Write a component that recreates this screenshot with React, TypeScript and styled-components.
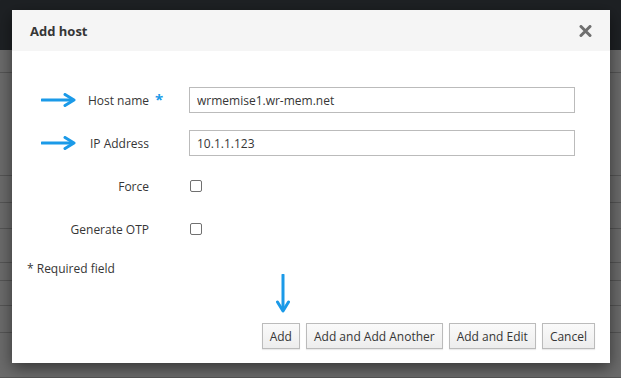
import React from "react";
import styled, { createGlobalStyle } from "styled-components";

const GlobalStyle = createGlobalStyle`
    html, body {
        margin: 0;
        padding: 0;
        background: #6b6b6b;
    }
    body {
        font-family: "Open Sans", "Liberation Sans", sans-serif;
    }
`;

const Page = styled.div`
    position: relative;
    width: 621px;
    height: 378px;
    overflow: hidden;
    background: #6b6b6b;
`;

const TopBar = styled.div`
    height: 50px;
    background: #1e2124;
`;

const BackRow = styled.div<{ $h: number }>`
    height: ${(p) => p.$h - 1}px;
    border-bottom: 1px solid #555555;
`;

const Modal = styled.div`
    position: absolute;
    top: 10px;
    left: 12px;
    width: 598px;
    height: 353px;
    background: #ffffff;
    box-shadow: 0 5px 15px rgba(0, 0, 0, 0.5);
    display: flex;
    flex-direction: column;
`;

const Header = styled.div`
    height: 41px;
    background: #f5f5f5;
    display: flex;
    align-items: center;
    justify-content: space-between;
    padding: 0 18px 0 18px;
    box-sizing: border-box;
`;

const Title = styled.h4`
    margin: 0;
    font-size: 13px;
    font-weight: 700;
    color: #363636;
`;

const CloseButton = styled.button`
    border: 0;
    background: none;
    padding: 0;
    display: flex;
    cursor: pointer;
`;

const Body = styled.div`
    flex: 1;
    padding-top: 36px;
    display: flex;
    flex-direction: column;
`;

const Form = styled.div`
    display: flex;
    flex-direction: column;
    gap: 17px;
`;

const FormRow = styled.div`
    display: grid;
    grid-template-columns: 137px 40px 386px;
    height: 26px;
    align-items: center;
`;

const LabelCell = styled.div`
    display: flex;
    align-items: center;
    padding-left: 29px;
    font-size: 12px;
    color: #363636;
`;

const LabelText = styled.label`
    margin-left: auto;
    white-space: nowrap;
`;

const Required = styled.span`
    color: #1b9ae8;
    font-size: 15px;
    font-weight: 700;
    padding-left: 6px;
    line-height: 1;
    align-self: start;
    padding-top: 5px;
`;

const TextInput = styled.input`
    box-sizing: border-box;
    height: 26px;
    width: 100%;
    border: 1px solid #bbbbbb;
    padding: 0 7px;
    font-family: "Open Sans", "Liberation Sans", sans-serif;
    font-size: 12px;
    color: #363636;
    outline: none;
`;

const Checkbox = styled.input`
    appearance: none;
    width: 12px;
    height: 12px;
    margin: 0 0 0 1px;
    border: 1px solid #707070;
    border-radius: 2px;
    background: #ffffff;
`;

const RequiredNote = styled.div`
    margin: 19px 0 0 15px;
    font-size: 12px;
    line-height: 16px;
    color: #363636;
`;

const Footer = styled.div`
    margin-top: auto;
    display: flex;
    justify-content: flex-end;
    gap: 6px;
    padding: 0 15px 14px 0;
`;

const Button = styled.button`
    height: 26px;
    padding: 0 7px;
    border: 1px solid #bbbbbb;
    background: linear-gradient(#fafafa, #ededed);
    box-shadow: 0 1px 1px rgba(3, 3, 3, 0.08);
    font-family: "Open Sans", "Liberation Sans", sans-serif;
    font-size: 12px;
    color: #363636;
    cursor: pointer;
`;

const DownArrow = styled.svg`
    position: absolute;
    left: 264px;
    top: 264px;
`;

const BLUE = "#1b9ae8";

const RightArrow: React.FC = () => (
    <svg width="36" height="14" viewBox="0 0 36 14">
        <path d="M1 7 H31" stroke={BLUE} strokeWidth="3.2" strokeLinecap="round" />
        <path d="M24 1.5 L33 7 L24 12.5" stroke={BLUE} strokeWidth="3" fill="none" strokeLinecap="round" strokeLinejoin="round" />
    </svg>
);

const backRows = [23, 103, 27, 26, 34, 18, 25, 27, 45];

const fields = [
    { label: "Host name", value: "wrmemise1.wr-mem.net", required: true, arrow: true },
    { label: "IP Address", value: "10.1.1.123", required: false, arrow: true },
];

const checks = ["Force", "Generate OTP"];

const buttons = ["Add", "Add and Add Another", "Add and Edit", "Cancel"];

const App: React.FC = () => {
    return (
        <Page>
            <GlobalStyle />
            <TopBar />
            {backRows.map((h, i) => (
                <BackRow key={i} $h={h} />
            ))}

            <Modal>
                <Header>
                    <Title>Add host</Title>
                    <CloseButton aria-label="Close">
                        <svg width="13" height="12" viewBox="0 0 13 12">
                            <path d="M2 1.5 L11 10.5 M11 1.5 L2 10.5" stroke="#6f6f6f" strokeWidth="3" strokeLinecap="round" />
                        </svg>
                    </CloseButton>
                </Header>

                <Body>
                    <Form>
                        {fields.map((f) => (
                            <FormRow key={f.label}>
                                <LabelCell>
                                    {f.arrow && <RightArrow />}
                                    <LabelText>{f.label}</LabelText>
                                </LabelCell>
                                {f.required ? <Required>*</Required> : <span />}
                                <TextInput defaultValue={f.value} />
                            </FormRow>
                        ))}
                        {checks.map((c) => (
                            <FormRow key={c}>
                                <LabelCell>
                                    <LabelText>{c}</LabelText>
                                </LabelCell>
                                <span />
                                <div>
                                    <Checkbox type="checkbox" />
                                </div>
                            </FormRow>
                        ))}
                    </Form>

                    <RequiredNote>* Required field</RequiredNote>

                    <Footer>
                        {buttons.map((b) => (
                            <Button key={b}>{b}</Button>
                        ))}
                    </Footer>
                </Body>

                <DownArrow width="14" height="40" viewBox="0 0 14 40">
                    <path d="M7 1 V35" stroke={BLUE} strokeWidth="3" strokeLinecap="round" />
                    <path d="M1.5 28 L7 37 L12.5 28" stroke={BLUE} strokeWidth="3" fill="none" strokeLinecap="round" strokeLinejoin="round" />
                </DownArrow>
            </Modal>
        </Page>
    );
};

export default App;
